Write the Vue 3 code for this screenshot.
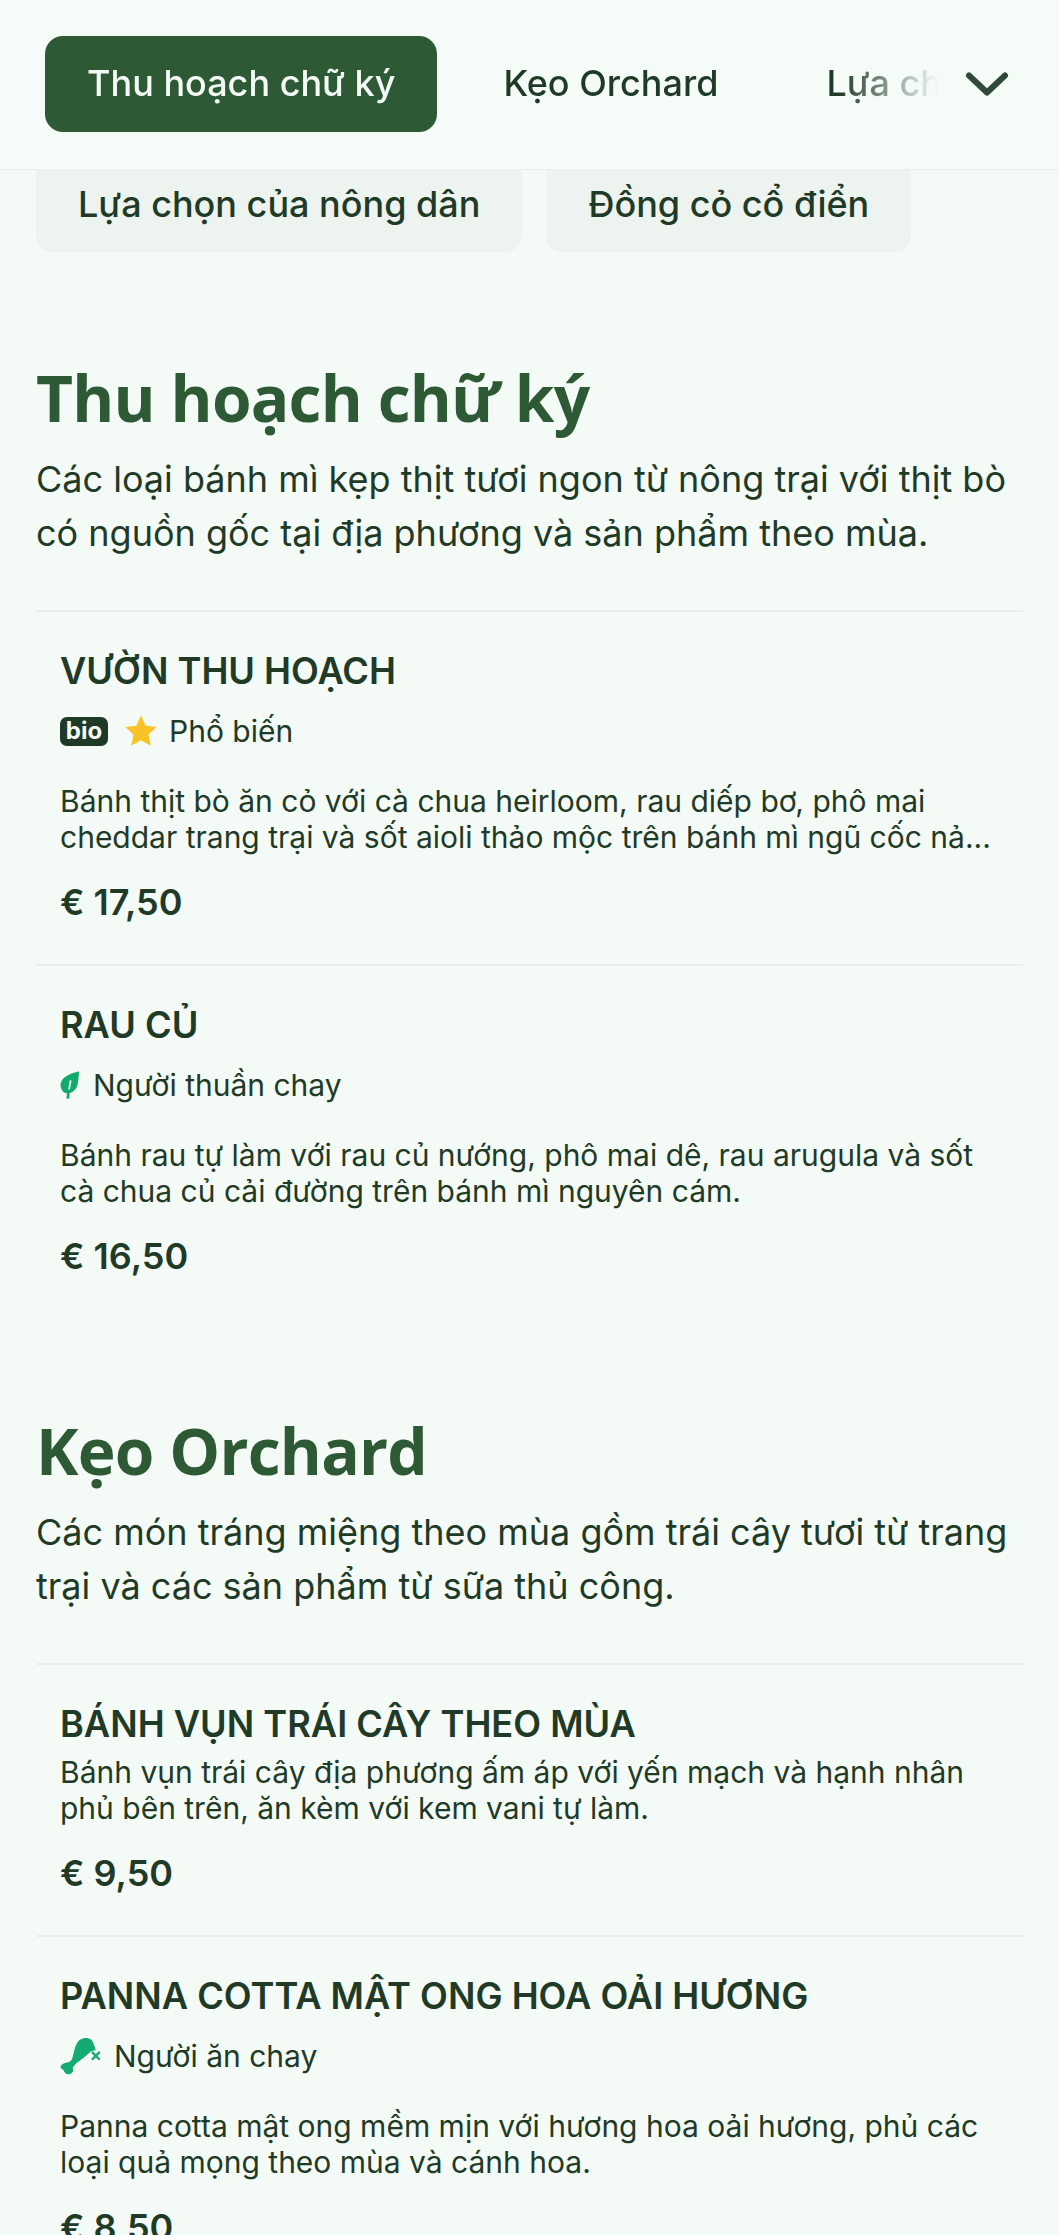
<script setup>
const navItems = ['Thu hoạch chữ ký', 'Kẹo Orchard', 'Lựa chọn của nông dân']
const subPills = ['Lựa chọn của nông dân', 'Đồng cỏ cổ điển']
const sections = [
  {
    title: 'Thu hoạch chữ ký',
    intro: 'Các loại bánh mì kẹp thịt tươi ngon từ nông trại với thịt bò có nguồn gốc tại địa phương và sản phẩm theo mùa.',
    items: [
      { name: 'VƯỜN THU HOẠCH', tag: 'popular', label: 'Phổ biến', desc: 'Bánh thịt bò ăn cỏ với cà chua heirloom, rau diếp bơ, phô mai cheddar trang trại và sốt aioli thảo mộc trên bánh mì ngũ cốc nả...', price: '€ 17,50' },
      { name: 'RAU CỦ', tag: 'vegan', label: 'Người thuần chay', desc: 'Bánh rau tự làm với rau củ nướng, phô mai dê, rau arugula và sốt cà chua củ cải đường trên bánh mì nguyên cám.', price: '€ 16,50' }
    ]
  },
  {
    title: 'Kẹo Orchard',
    intro: 'Các món tráng miệng theo mùa gồm trái cây tươi từ trang trại và các sản phẩm từ sữa thủ công.',
    items: [
      { name: 'BÁNH VỤN TRÁI CÂY THEO MÙA', tag: '', label: '', desc: 'Bánh vụn trái cây địa phương ấm áp với yến mạch và hạnh nhân phủ bên trên, ăn kèm với kem vani tự làm.', price: '€ 9,50' },
      { name: 'PANNA COTTA MẬT ONG HOA OẢI HƯƠNG', tag: 'veg', label: 'Người ăn chay', desc: 'Panna cotta mật ong mềm mịn với hương hoa oải hương, phủ các loại quả mọng theo mùa và cánh hoa.', price: '€ 8,50' }
    ]
  }
]
</script>

<template>
  <div class="page">
    <header class="nav">
      <div class="nav-scroll">
        <span v-for="(n, i) in navItems" :key="n" class="nav-item" :class="{ active: i === 0 }">{{ n }}</span>
      </div>
      <svg class="chev" viewBox="0 0 44 26" width="44" height="26" fill="none">
        <path d="M4 4.5 22 21.5 40 4.5" stroke="#2f4a38" stroke-width="6" stroke-linecap="round" stroke-linejoin="round" />
      </svg>
    </header>

    <div class="subrow">
      <span v-for="p in subPills" :key="p" class="subpill">{{ p }}</span>
    </div>

    <section v-for="s in sections" :key="s.title" class="section">
      <h2>{{ s.title }}</h2>
      <p class="intro">{{ s.intro }}</p>
      <article v-for="it in s.items" :key="it.name" class="item">
        <h3>{{ it.name }}</h3>
        <div v-if="it.tag" class="tags">
          <template v-if="it.tag === 'popular'">
            <span class="bio">bio</span>
            <svg class="star" viewBox="0 0 32 32" width="34" height="34"><path d="M16 1.5l4.4 9.6 10.4 1.2-7.7 7.1 2.1 10.4L16 24.6l-9.2 5.2 2.1-10.4-7.7-7.1 10.4-1.2z" fill="#f8c327" /></svg>
          </template>
          <svg v-if="it.tag === 'vegan'" class="leaf" viewBox="0 0 20 28" width="20" height="28">
            <path d="M19 0.5C19 0.5 10 2 4.5 6.5C-0.5 10.5 -0.5 17 3 20.5C4 21.5 5.5 22 7 22.2L6.4 27.5L9.2 27.7L9.6 22C13.5 21 16.6 18 17.6 13.5C18.6 9 19 0.5 19 0.5ZM11.6 9.5L9.9 18.5L8.2 18.2L9.8 9.2Z" fill="#12a96d" />
          </svg>
          <svg v-if="it.tag === 'veg'" class="leg" viewBox="0 0 42 37" width="42" height="37">
            <path d="M0.7 28.3C1.5 26 3.5 25.5 5 25C8 24.5 10.5 23.5 11.7 21.7C13.5 18 13.5 14 15 10C16 6 18 3 20 1.7C23 0 26 -0.3 28.3 0.3C31 1 32.8 3 33.3 5C34 7.5 35.5 10 35.7 12.3L32.5 12.8C31 13 30 14 30 14.3C28 16 26 18 23.3 20C20 22.5 17 24.5 15 26.7C13.5 28 13 29 12.7 30C13.5 32 13 34 11.7 35C10.3 36.3 8 36.5 6.7 36C5 35.3 4 33.5 3.3 31.7C1.5 31.5 0.2 30 0.7 28.3Z" fill="#14ab72" />
            <path d="M32.6 14.6l6.4 6.4M39 14.6l-6.4 6.4" stroke="#14ab72" stroke-width="2.4" stroke-linecap="round" />
          </svg>
          <span class="tag-label">{{ it.label }}</span>
        </div>
        <p class="desc">{{ it.desc }}</p>
        <div class="price">{{ it.price }}</div>
      </article>
    </section>
  </div>
</template>

<style>
html, body { margin: 0; background: #f4faf6; }
</style>

<style scoped>
.page {
  width: 1059px;
  height: 2235px;
  overflow: hidden;
  background: #f4faf6;
  color: #1f3a27;
  font-family: Inter, "Liberation Sans", sans-serif;
}
.nav {
  height: 170px;
  box-sizing: border-box;
  border-bottom: 1px solid #e9efea;
  display: flex;
  align-items: center;
  padding: 0 50px 2px 45px;
  background: #f5fbf7;
  position: relative;
  z-index: 1;
}
.nav-scroll {
  flex: 1;
  min-width: 0;
  display: flex;
  gap: 24px;
  overflow: hidden;
  -webkit-mask-image: linear-gradient(to right, #000 88%, transparent 99%);
  mask-image: linear-gradient(to right, #000 88%, transparent 99%);
  margin-right: 18px;
}
.nav-item {
  flex: none;
  height: 96px;
  box-sizing: border-box;
  padding: 0 42px 2px;
  display: flex;
  align-items: center;
  font-size: 36px;
  font-weight: 500;
  border-radius: 18px;
  white-space: nowrap;
  color: #1f3a27;
}
.nav-item.active {
  background: #2d5a35;
  color: #f4faf6;
}
.chev { flex: none; }
.subrow {
  height: 82px;
  display: flex;
  gap: 24px;
  padding: 0 36px;
  overflow: hidden;
  align-items: flex-end;
}
.subpill {
  flex: none;
  height: 96px;
  padding: 0 42px;
  display: flex;
  align-items: center;
  justify-content: center;
  box-sizing: border-box;
  background: #edf3ee;
  border-radius: 16px;
  font-size: 36px;
  font-weight: 500;
  white-space: nowrap;
}
.section {
  padding: 0 36px;
  margin-top: 110px;
}
.section + .section { margin-top: 97px; }
h2 {
  margin: 0;
  font-family: "Open Sans", "Noto Sans", sans-serif;
  font-weight: 700;
  font-size: 64px;
  letter-spacing: -0.8px;
  line-height: 72px;
  color: #2d5a35;
}
.intro {
  margin: 18px 0 0;
  font-size: 36px;
  line-height: 54px;
  padding-bottom: 50px;
}
.item {
  border-top: 2px solid #e9efea;
  padding: 37px 24px 40px;
}
h3 {
  margin: 0;
  font-size: 36.2px;
  font-weight: 600;
  line-height: 44px;
}
.tags {
  display: flex;
  align-items: center;
  height: 40px;
  margin-top: 18px;
  margin-bottom: 32px;
}
.bio {
  width: 48px;
  height: 29px;
  background: #1f3a27;
  color: #f4faf6;
  border-radius: 7px;
  font-size: 24px;
  font-weight: 700;
  line-height: 28px;
  text-align: center;
  margin-right: 16px;
}
.star { margin-right: 11px; }
.leaf { margin-right: 13px; }
.leg { margin-right: 12px; }
.tag-label { font-size: 30px; line-height: 36px; }
.desc {
  margin: 8px 0 0;
  font-size: 30px;
  line-height: 36px;
}
.price {
  margin-top: 25px;
  font-size: 36px;
  font-weight: 600;
  line-height: 44px;
}
</style>
